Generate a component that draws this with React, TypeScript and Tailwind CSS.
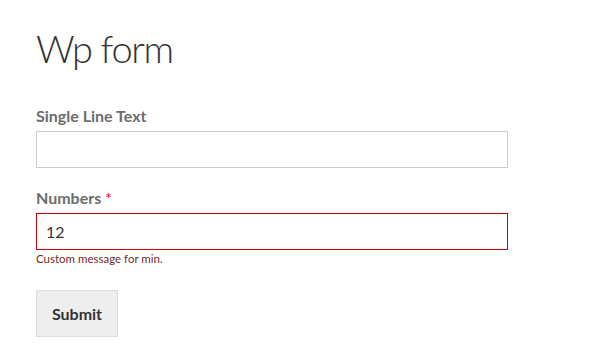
export default function App() {
  return (
    <div className="min-h-[363px] bg-white px-9 pt-[20px] font-['Lato','Open_Sans',sans-serif] text-[#404040]">
      <h1 className="text-[38px] font-light leading-[57px] text-[#333] tracking-[-1.3px]">Wp form</h1>
      <form className="mt-[29px] w-[472px]" onSubmit={e => e.preventDefault()}>
        <div className="mb-[20px]">
          <label className="block text-[16px] font-bold leading-[20px] text-[#6d6d6d]">Single Line Text</label>
          <input
            type="text"
            className="mt-[5px] block h-[37px] w-full border border-[#ccc] bg-white px-2 text-[16px] outline-none"
          />
        </div>
        <div className="mb-[24px]">
          <label className="block text-[16px] font-bold leading-[20px] text-[#6d6d6d]">
            Numbers <span className="text-[#e00] font-normal">*</span>
          </label>
          <input
            type="text"
            defaultValue="12"
            className="mt-[5px] block h-[37px] w-full border border-[#c00] bg-white px-[9px] text-[16px] text-[#333] outline-none"
          />
          <p className="mt-[2px] text-[11.5px] leading-[14px] text-[#7a1f1f]">Custom message for min.</p>
        </div>
        <button
          type="submit"
          className="h-[47px] w-[82px] border border-[#ddd] bg-[#eee] text-[16px] font-bold text-[#333]"
        >
          Submit
        </button>
      </form>
    </div>
  )
}
